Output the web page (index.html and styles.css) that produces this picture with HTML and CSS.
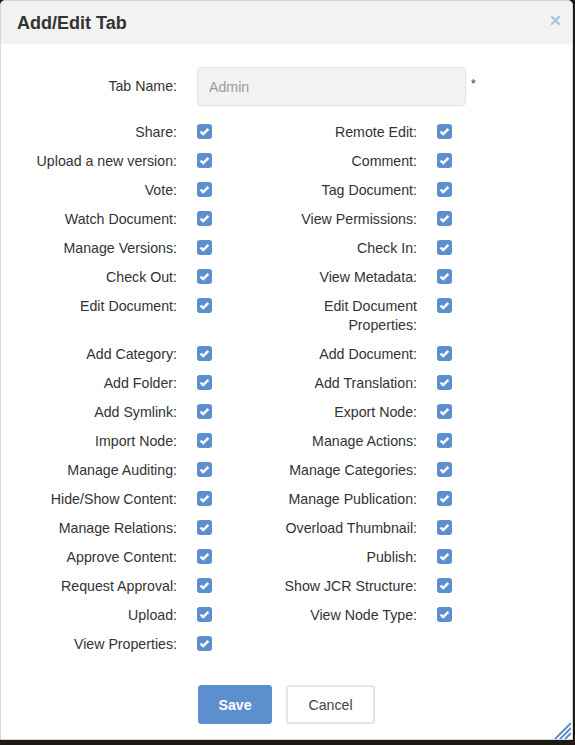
FILE: index.html
```html
<!DOCTYPE html>
<html>
<head>
<meta charset="utf-8">
<link rel="stylesheet" href="styles.css">
</head>
<body>
<div class="dialog">
  <div class="header">
    <h1 class="title">Add/Edit Tab</h1>
    <svg class="close" width="9" height="9" viewBox="0 0 9 9"><path d="M1 1L8 8M8 1L1 8" stroke="#a3bedf" stroke-width="2" stroke-linecap="square"/></svg>
  </div>
  <div class="body">
    <div class="name-row">
      <label class="lbl">Tab Name:</label>
      <input class="name-input" type="text" value="Admin" disabled>
      <span class="req">*</span>
    </div>
    <div class="grid" id="grid"></div>
  </div>
  <div class="footer">
    <button class="btn btn-save">Save</button>
    <button class="btn btn-cancel">Cancel</button>
  </div>
  <svg class="resize" width="20" height="20" viewBox="0 0 20 20"><path d="M20 4L4 20M20 9L9 20M20 14L14 20" stroke="#5b8fcd" stroke-width="2"/></svg>
</div>
<script>
var items = [
 ["Share","Remote Edit"],["Upload a new version","Comment"],["Vote","Tag Document"],
 ["Watch Document","View Permissions"],["Manage Versions","Check In"],["Check Out","View Metadata"],
 ["Edit Document","Edit Document Properties"],["Add Category","Add Document"],["Add Folder","Add Translation"],
 ["Add Symlink","Export Node"],["Import Node","Manage Actions"],["Manage Auditing","Manage Categories"],
 ["Hide/Show Content","Manage Publication"],["Manage Relations","Overload Thumbnail"],["Approve Content","Publish"],
 ["Request Approval","Show JCR Structure"],["Upload","View Node Type"],["View Properties",null]];
var check = '<svg width="15" height="15" viewBox="0 0 15 15"><rect width="15" height="15" rx="3" fill="#5b8fcd"/><path d="M3.6 7.6L6.2 10.1L11.4 4.9" fill="none" stroke="#fff" stroke-width="2.4"/></svg>';
var g = document.getElementById('grid');
var html = '';
items.forEach(function(r){
  html += '<div class="row">';
  r.forEach(function(t){
    html += '<div class="cell">';
    if (t) html += '<span class="lbl">'+t+':</span><span class="cb">'+check+'</span>';
    html += '</div>';
  });
  html += '</div>';
});
g.innerHTML = html;
</script>
</body>
</html>
```
FILE: styles.css
```css
html, body {
  margin: 0;
  padding: 0;
  background: #1d1915;
  font-family: "Liberation Sans", Arial, sans-serif;
  font-size: 14.2px;
  color: #333;
}
.dialog {
  position: relative;
  width: 573px;
  height: 740px;
  box-sizing: border-box;
  background: #fff;
  border: 1px solid #d6d6d6;
  border-radius: 5px 5px 0 0;
  display: flex;
  flex-direction: column;
}
.header {
  height: 43px;
  background: #f2f2f2;
  border-radius: 5px 5px 0 0;
  display: flex;
  align-items: center;
  justify-content: space-between;
  padding: 0 12px 0 16px;
}
.title {
  margin: 0;
  font-size: 18px;
  font-weight: bold;
  color: #333;
  position: relative;
  top: 1px;
}
.close {
  position: relative;
  top: -2px;
}
.body {
  padding: 23px 0 0 26px;
}
.name-row {
  display: flex;
  align-items: center;
}
.lbl {
  width: 150px;
  text-align: right;
  line-height: 19px;
  flex: none;
}
.name-input {
  margin-left: 20px;
  width: 269px;
  height: 39px;
  box-sizing: border-box;
  background: #f2f2f2;
  border: 1px solid #dde3ea;
  border-radius: 4px;
  padding: 0 11px;
  font-family: inherit;
  font-size: 14.2px;
  color: #999;
}
.req {
  align-self: flex-start;
  margin-left: 5px;
  margin-top: 10px;
  font-size: 12px;
}
.grid {
  margin-top: 17px;
  display: flex;
  flex-direction: column;
  gap: 10px;
}
.row {
  display: flex;
}
.cell {
  width: 240px;
  display: flex;
  align-items: flex-start;
}
.cb {
  margin-left: 20px;
  height: 15px;
  margin-top: 1px;
}
.cb svg {
  display: block;
}
.footer {
  margin-top: 31px;
  padding-left: 197px;
  display: flex;
  gap: 14px;
}
.btn {
  height: 39px;
  border-radius: 3px;
  font-family: inherit;
  font-size: 14.2px;
  padding: 0;
}
.btn-save {
  width: 74px;
  background: #5b8fcd;
  border: 1px solid #5b8fcd;
  color: #fff;
  font-weight: bold;
}
.btn-cancel {
  width: 89px;
  background: #fff;
  border: 2px solid #e1e7ee;
  color: #444;
}
.resize {
  position: absolute;
  right: 1px;
  bottom: 0;
}
```
